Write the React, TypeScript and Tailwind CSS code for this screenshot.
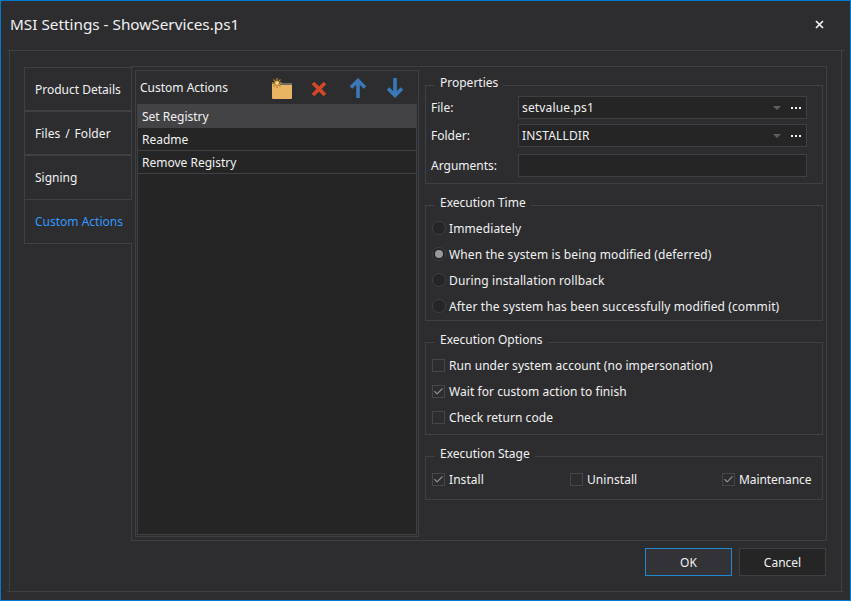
import React from "react";
import { Check } from "lucide-react";

const font = "font-['Noto_Sans',sans-serif]";

const FolderIcon = () => (
  <svg width="20" height="21" viewBox="0 0 20 21" className="mt-px">
    <path d="M0 6h19q1 0 1 1v13q0 1-1 1H1q-1 0-1-1z" fill="#e8b563" />
    <path d="M8 5h12v2H8z" fill="#6b6b6b" />
    <path d="M5 0v10M0 5h10M1.5 1.5l7 7M8.500 1.500l-7 7" stroke="#b5842f" strokeWidth="1.3" />
    <circle cx="5" cy="5" r="1.800" fill="#f5dc94" />
  </svg>
);

const DeleteIcon = () => (
  <svg width="16" height="16" viewBox="0 0 16 16" className="mt-[2px]">
    <path d="M2 2l12 12M14 2L2 14" stroke="#d1472a" strokeWidth="3.8" />
  </svg>
);

const ArrowIcon = ({ down }: { down?: boolean }) => (
  <svg width="18" height="20" viewBox="0 0 18 20" className={`mt-px ${down ? "rotate-180" : ""}`}>
    <path d="M9 20V3M2 9.500L9 2.500l7 7" fill="none" stroke="#3a78b8" strokeWidth="3.6" />
  </svg>
);

const Group = ({ title, className, children }: { title: string; className: string; children: React.ReactNode }) => (
  <div className={`relative border border-[#3f3f46] ${className}`}>
    <span className="absolute left-[9px] top-[-12px] bg-[#2d2d30] px-[5px] leading-[18px]">{title}</span>
    {children}
  </div>
);

const Radio = ({ label, checked }: { label: string; checked?: boolean }) => (
  <div className="flex h-[26px] items-center pl-[6px]">
    <span className="flex h-[14px] w-[14px] items-center justify-center rounded-full border border-[#3f3f46] bg-[#252526]">
      {checked && <span className="h-[8px] w-[8px] rounded-full bg-[#999999]" />}
    </span>
    <span className="ml-[3px] pt-[2px] tracking-[0.12px]">{label}</span>
  </div>
);

const CheckBox = ({ label, checked, className = "", labelClass = "tracking-[0.06px]" }: { label: string; checked?: boolean; className?: string; labelClass?: string }) => (
  <div className={`flex h-[26px] items-center ${className}`}>
    <span className="flex h-[13px] w-[13px] items-center justify-center border border-[#46464a] bg-[#2d2d30]">
      {checked && <Check size={11} strokeWidth={2.4} className="text-[#8f8f8f]" />}
    </span>
    <span className={`ml-[4px] pt-[2px] ${labelClass}`}>{label}</span>
  </div>
);

const Field = ({ label, value, picker, className = "" }: { label: string; value?: string; picker?: boolean; className?: string }) => (
  <div className={`flex h-[23px] items-center ${className}`}>
    <span className="w-[92px] pl-[5px]">{label}</span>
    <div className="flex h-full w-[289px] items-center border border-[#3f3f46] bg-[#252526] pl-[3px]">
      <span className="flex-1 tracking-[0.15px]">{value}</span>
      {picker && (
        <>
          <span className="mr-[10px] h-0 w-0 border-x-[4px] border-t-[4px] border-x-transparent border-t-[#5f5f63]" />
          <span className="mr-[5px] flex gap-[2px]">
            <span className="h-[2px] w-[2px] bg-[#f1f1f1]" />
            <span className="h-[2px] w-[2px] bg-[#f1f1f1]" />
            <span className="h-[2px] w-[2px] bg-[#f1f1f1]" />
          </span>
        </>
      )}
    </div>
  </div>
);

const actions = ["Readme", "Remove Registry"];

export default function App() {
  return (
    <div className={`flex h-[601px] w-[851px] flex-col border border-[#007acc] bg-[#2d2d30] text-[12px] text-[#f1f1f1] ${font}`}>
      <div className="flex h-[49px] shrink-0 items-center justify-between pb-[2px] pl-[9px] pr-[26px]">
        <span className="text-[15.3px]">MSI Settings - ShowServices.ps1</span>
        <svg width="9" height="9" viewBox="0 0 9 9">
          <path d="M1 1l7 7M8 1L1 8" stroke="#f1f1f1" strokeWidth="1.7" />
        </svg>
      </div>

      <div className="mx-[6px] h-[542px] border-y border-[#3f3f46]">
        <div className="mx-[2px] flex h-full flex-col border-x border-[#3f3f46] pl-[14px] pr-[14px] pt-[15px]">
          <div className="flex">
            <div className="relative z-10 -mr-px mt-px w-[108px] shrink-0">
              <div className="flex h-[44px] items-center border border-[#3f3f46] pl-[10px] pt-[2px]">
                Product Details
              </div>
              <div className="flex h-[44px] items-center border border-[#3f3f46] pl-[10px] pt-[2px] [word-spacing:1.5px] tracking-[0.1px]">
                Files / Folder
              </div>
              <div className="flex h-[44px] items-center border border-b-0 border-[#3f3f46] pl-[10px]">
                Signing
              </div>
              <div className="flex h-[45px] items-center border border-r-0 border-[#3f3f46] bg-[#2d2d30] pl-[10px] text-[#3399ff]">
                Custom Actions
              </div>
            </div>

            <div className="flex h-[475px] w-[696px] border border-[#3f3f46] p-[3px]">
              <div className="flex w-[284px] flex-col border border-[#3f3f46] p-px">
                <div className="flex h-[31px] shrink-0 items-center pl-[3px]">
                  <span className="w-[132px]">Custom Actions</span>
                  <FolderIcon />
                  <span className="ml-[19px]"><DeleteIcon /></span>
                  <span className="ml-[22px]"><ArrowIcon /></span>
                  <span className="ml-[19px]"><ArrowIcon down /></span>
                </div>
                <div className="flex-1 border border-[#3f3f46] border-t-[#2d2d30] bg-[#252526]">
                  <div className="flex h-[24px] items-center bg-[#434346] pl-[4px] pt-[2px]">Set Registry</div>
                  {actions.map((a) => (
                    <div key={a} className="flex h-[23px] items-center border-b border-[#3f3f46] pl-[4px] pt-[2px]">{a}</div>
                  ))}
                </div>
              </div>

              <div className="ml-[6px] mt-[15px] flex w-[398px] flex-col gap-[21px]">
                <Group title="Properties" className="h-[99px] pt-[10px]">
                  <Field label="File:" value="setvalue.ps1" picker />
                  <Field label="Folder:" value="INSTALLDIR" picker className="mt-[5px]" />
                  <Field label="Arguments:" className="mt-[7px]" />
                </Group>
                <Group title="Execution Time" className="h-[116px] pt-[9px]">
                  <Radio label="Immediately" />
                  <Radio label="When the system is being modified (deferred)" checked />
                  <Radio label="During installation rollback" />
                  <Radio label="After the system has been successfully modified (commit)" />
                </Group>
                <Group title="Execution Options" className="h-[93px] pl-[6px] pt-[9px]">
                  <CheckBox label="Run under system account (no impersonation)" />
                  <CheckBox label="Wait for custom action to finish" checked />
                  <CheckBox label="Check return code" />
                </Group>
                <Group title="Execution Stage" className="h-[44px] pl-[6px] pt-[9px]">
                  <div className="flex">
                    <CheckBox label="Install" checked className="w-[138px]" />
                    <CheckBox label="Uninstall" className="w-[152px]" />
                    <CheckBox label="Maintenance" checked labelClass="tracking-[-0.08px]" />
                  </div>
                </Group>
              </div>
            </div>
          </div>

          <div className="mt-[7px] flex justify-end gap-[7px] pr-px">
            <button className="h-[28px] w-[87px] border border-[#1f8ad2] bg-[#333337] pt-[2px]">OK</button>
            <button className="h-[28px] w-[87px] border border-[#3f3f46] bg-[#252526] pt-[2px]">Cancel</button>
          </div>
        </div>
      </div>
    </div>
  );
}
